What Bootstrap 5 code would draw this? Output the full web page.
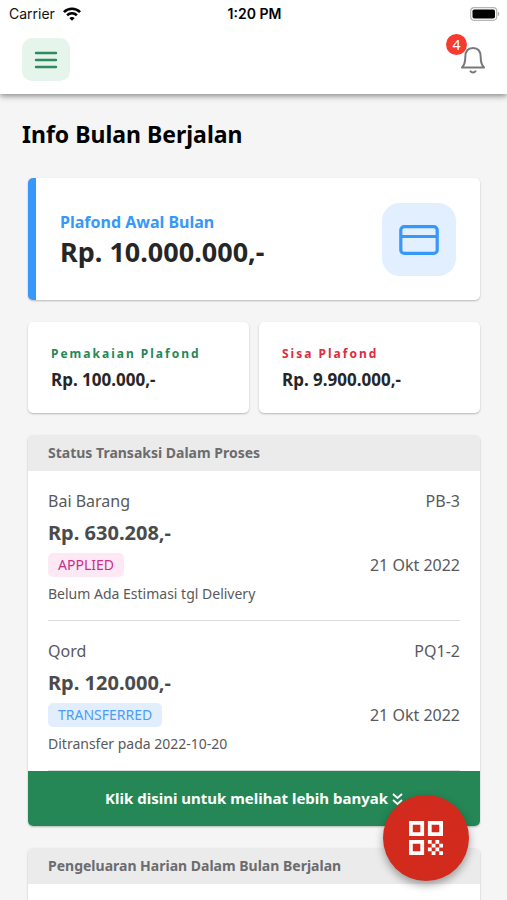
<!DOCTYPE html>
<html lang="id">
<head>
<meta charset="utf-8">
<meta name="viewport" content="width=device-width, initial-scale=1">
<title>Info Bulan Berjalan</title>
<link href="https://cdn.jsdelivr.net/npm/bootstrap@5.3.0/dist/css/bootstrap.min.css" rel="stylesheet">
<style>
  body { font-family: "Noto Sans", "Open Sans", sans-serif; background: #f5f5f5; color: #58595b; font-size: 16px; line-height: 24px; }
  .app-header { background: #fff; box-shadow: 0 2px 6px rgba(0,0,0,.45); z-index: 2; }
  .status-bar { font-family: Inter, "Liberation Sans", sans-serif; font-size: 14px; line-height: 20px; color: #111; padding: 4px 7px 0 9px; }
  .status-bar > div { flex: 1 1 0; }
  .status-bar .clock { font-weight: 600; color: #000; text-align: center; }
  .toolbar { padding: 14px 20px 13px 22px; }
  .menu-btn { width: 48px; height: 43px; border-radius: 10px; background: #e6f5ec; }
  .bell-btn { width: 30px; height: 30px; }
  .bell-count { position: absolute; left: -11px; top: -11px; width: 21px; height: 21px; border-radius: 50%; background: #f43b30; color: #fff; font-size: 14px; line-height: 21px; }
  .app-main { overflow-y: auto; scrollbar-width: none; padding: 24px 27px 24px 28px; }
  .app-main::-webkit-scrollbar { display: none; }
  .page-title { font-size: 23px; line-height: 32px; font-weight: 700; color: #000; margin: 0 0 28px -6px; }
  .panel { background: #fff; border-radius: 5px; box-shadow: 0 1px 2px rgba(0,0,0,.25); overflow: hidden; }
  .block { margin-bottom: 22px; }
  .stats { --bs-gutter-x: 10px; }
  .hero { border-left: 8px solid #3797fb; padding: 25px 24px 24px; }
  .hero-label { color: #3797fb; font-size: 16px; font-weight: 700; line-height: 24px; }
  .hero-value { color: #262626; font-size: 27px; font-weight: 700; line-height: 36px; }
  .hero-icon { width: 74px; height: 73px; border-radius: 18px; background: #e2effe; }
  .stat { padding: 22px 23px 20px; }
  .stat-label { font-size: 12px; line-height: 20px; font-weight: 700; letter-spacing: 2px; margin-bottom: 3px; }
  .stat-value { font-size: 17px; line-height: 26px; font-weight: 700; color: #262626; }
  .green { color: #258755; }
  .red { color: #e02b3c; }
  .panel-head { background: #ebebeb; font-size: 14px; line-height: 20px; font-weight: 700; color: #6b6c6e; padding: 8px 20px; }
  .trx-list { padding: 0 20px; }
  .trx { padding: 18px 0 16px; border-bottom: 1px solid #dcdcdc; }
  .amount { font-size: 20px; line-height: 28px; font-weight: 700; color: #4a4b4d; padding: 6px 0; }
  .tag { font-size: 14px; line-height: 24px; border-radius: 5px; padding: 0 10px; }
  .tag-applied { background: #fde8f4; color: #c9308e; }
  .tag-sent { background: #e2eefd; color: #4a9df8; }
  .note { font-size: 14px; line-height: 20px; padding-top: 7px; }
  .more-btn { background: #258755; color: #fff; font-size: 15px; line-height: 23px; font-weight: 700; padding: 16px; }
  .fab { right: 38px; bottom: 19px; width: 86px; height: 86px; background: #d22b1d; box-shadow: 0 4px 8px rgba(0,0,0,.35); z-index: 3; }
</style>
</head>
<body>
<div class="d-flex flex-column vh-100">
  <header class="app-header">
    <div class="status-bar d-flex align-items-center">
      <div class="d-flex align-items-center gap-2">
        <span>Carrier</span>
        <svg width="18" height="14" viewBox="0 0 18 14" fill="none" stroke="#000" stroke-width="2.6" aria-hidden="true"><path d="M.9 5.1C5.4.6 12.600.6 17.100 5.100"/><path d="M4.100 8.300c2.800-2.700 7-2.700 9.800 0"/><path d="M9 13.800 6.300 11c1.600-1.400 3.800-1.400 5.400 0z" fill="#000" stroke="none"/></svg>
      </div>
      <div class="clock">1:20 PM</div>
      <div class="d-flex justify-content-end">
        <svg width="30" height="14" viewBox="0 0 30 14" aria-hidden="true"><rect x=".7" y=".7" width="26" height="12.600" rx="3.500" fill="#fff" stroke="#b5b5b5" stroke-width="1.200"/><rect x="2.500" y="2.400" width="22.500" height="9.200" rx="1.800"/><path d="M27.800 4.800c2 .6 2 3.800 0 4.400z" fill="#aaa"/></svg>
      </div>
    </div>
    <div class="toolbar d-flex justify-content-between align-items-center">
      <button type="button" class="menu-btn btn p-0 border-0 d-flex align-items-center justify-content-center" aria-label="Menu">
        <svg width="24" height="18" viewBox="0 0 24 18" stroke="#2e8b5d" stroke-width="2.400" stroke-linecap="round" aria-hidden="true"><path d="M2 2h20M2 9h20M2 16h20"/></svg>
      </button>
      <button type="button" class="bell-btn btn p-0 border-0 position-relative" aria-label="Notifikasi">
        <svg class="d-block ms-auto" width="28" height="30" viewBox="0 0 28 30" fill="none" stroke="#77787a" stroke-width="2" stroke-linejoin="round" stroke-linecap="round" aria-hidden="true"><path d="M3 22.500c2.300-2.400 3.300-6 3.300-10.300C6.300 6 9.400 3 14 3s7.700 3 7.700 9.200c0 4.300 1 7.900 3.300 10.300z"/><path d="M11.500 26.300c1 1.500 4 1.500 5 0"/></svg>
        <span class="bell-count">4</span>
      </button>
    </div>
  </header>

  <main class="app-main flex-grow-1">
    <h1 class="page-title">Info Bulan Berjalan</h1>

    <section class="panel hero block d-flex justify-content-between align-items-center">
      <div>
        <div class="hero-label">Plafond Awal Bulan</div>
        <div class="hero-value">Rp. 10.000.000,-</div>
      </div>
      <div class="hero-icon d-flex align-items-center justify-content-center">
        <svg width="40" height="30" viewBox="0 0 40 30" fill="none" stroke="#3797fb" stroke-width="3.200" aria-hidden="true"><rect x="1.800" y="1.600" width="36.400" height="26.800" rx="3.500"/><path d="M2 11.500h36"/></svg>
      </div>
    </section>

    <div class="row stats block">
      <div class="col-6"><section class="panel stat">
        <div class="stat-label green">Pemakaian Plafond</div>
        <div class="stat-value">Rp. 100.000,-</div>
      </section></div>
      <div class="col-6"><section class="panel stat">
        <div class="stat-label red">Sisa Plafond</div>
        <div class="stat-value">Rp. 9.900.000,-</div>
      </section></div>
    </div>

    <section class="panel block">
      <h2 class="panel-head m-0">Status Transaksi Dalam Proses</h2>
      <div class="trx-list">
        <article class="trx">
          <div class="d-flex justify-content-between"><span>Bai Barang</span><span>PB-3</span></div>
          <div class="amount">Rp. 630.208,-</div>
          <div class="d-flex justify-content-between"><span class="tag tag-applied">APPLIED</span><span>21 Okt 2022</span></div>
          <div class="note">Belum Ada Estimasi tgl Delivery</div>
        </article>
        <article class="trx">
          <div class="d-flex justify-content-between"><span>Qord</span><span>PQ1-2</span></div>
          <div class="amount">Rp. 120.000,-</div>
          <div class="d-flex justify-content-between"><span class="tag tag-sent">TRANSFERRED</span><span>21 Okt 2022</span></div>
          <div class="note">Ditransfer pada 2022-10-20</div>
        </article>
      </div>
      <button type="button" class="more-btn btn w-100 border-0 rounded-0">Klik disini untuk melihat lebih banyak
        <svg width="11" height="13" viewBox="0 0 11 13" fill="none" stroke="#fff" stroke-width="1.700" aria-hidden="true"><path d="m1 1 4.500 4L10 1M1 7l4.500 4L10 7"/></svg>
      </button>
    </section>

    <section class="panel">
      <h2 class="panel-head m-0">Pengeluaran Harian Dalam Bulan Berjalan</h2>
      <div class="p-5"></div>
    </section>
  </main>
</div>

<button type="button" class="fab btn p-0 border-0 rounded-circle position-fixed d-flex align-items-center justify-content-center" aria-label="Pindai QR">
  <svg width="34" height="34" viewBox="0 0 18 18" fill="#fff" aria-hidden="true"><path fill-rule="evenodd" d="M0 0h8v8H0zM2 2v4h4V2zM10 0h8v8h-8zM12 2v4h4V2zM0 10h8v8H0zM2 12v4h4v-4z"/><path d="M10 10h2v2h-2zM14 10h2v2h-2zM12 12h2v2h-2zM16 12h2v2h-2zM10 14h2v2h-2zM14 14h2v2h-2zM12 16h2v2h-2zM16 16h2v2h-2z"/></svg>
</button>
<script src="https://cdn.jsdelivr.net/npm/bootstrap@5.3.0/dist/js/bootstrap.bundle.min.js"></script>
</body>
</html>
